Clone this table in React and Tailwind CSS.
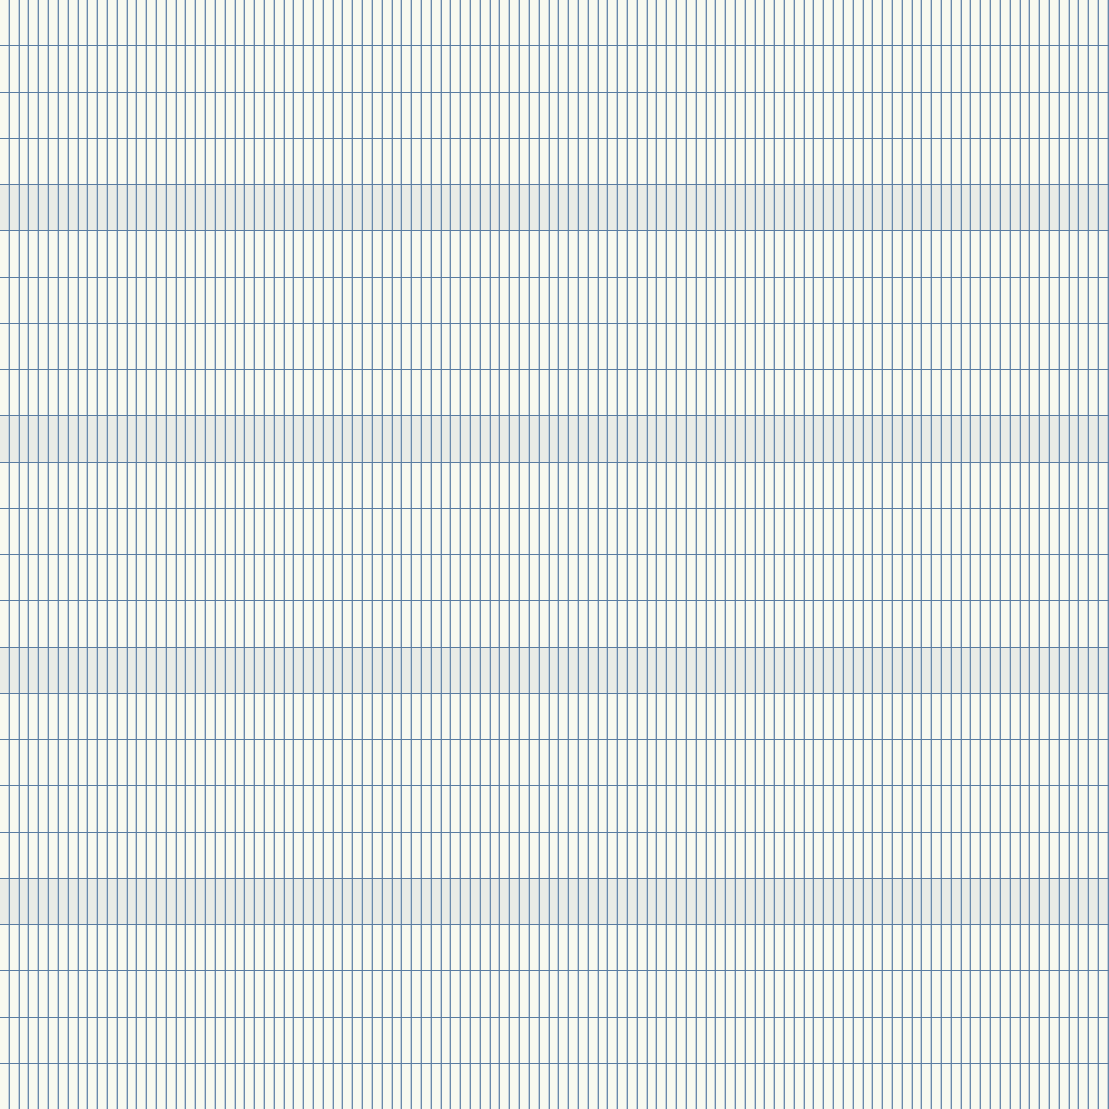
import React from "react";

const ROWS = 24;
const COLS = 113;

export default function App() {
  const rows = Array.from({ length: ROWS }, (_, r) => r);
  const cols = Array.from({ length: COLS }, (_, c) => c);
  return (
    <div className="w-[1109px] h-[1109px] flex flex-col bg-[#f8f9f0] overflow-hidden">
      {rows.map((r) => (
        <div
          key={r}
          className={[
            "flex-1 flex",
            r % 5 === 4 ? "bg-[#e9ebe6]" : "bg-[#f8f9f0]",
            r === ROWS - 1 ? "" : "border-b border-[#5a7ca1]",
          ].join(" ")}
        >
          {cols.map((c) => (
            <div
              key={c}
              className="flex-1 border-r border-[#6a89ab] shadow-[-1px_0_0_0_#c2cfda_inset]"
            />
          ))}
        </div>
      ))}
    </div>
  );
}
